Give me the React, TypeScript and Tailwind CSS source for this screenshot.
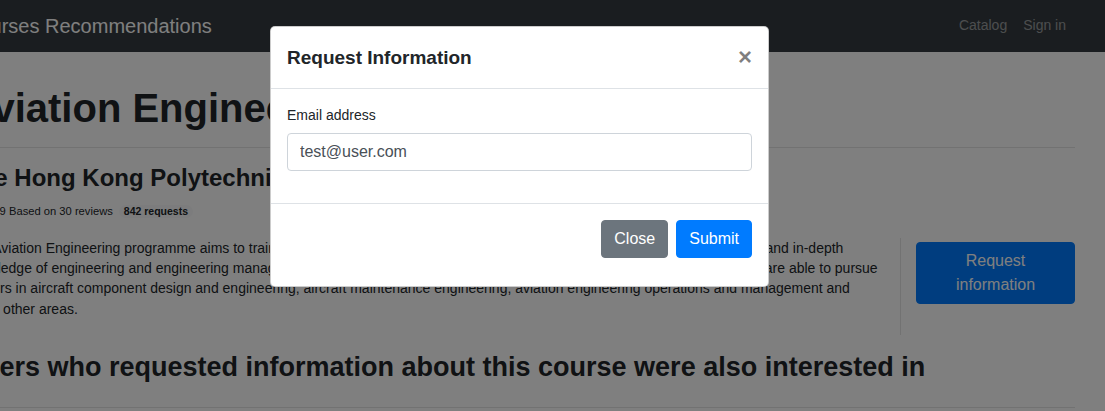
import React from "react";

const App: React.FC = () => {
  return (
    <div className="relative h-[411px] overflow-hidden bg-white font-['Liberation_Sans',Arial,sans-serif] text-[#212529]">
      {/* navbar */}
      <nav className="h-[52px] bg-[#343a40] flex items-center">
        <div className="ml-[-35px] w-[1110px] shrink-0 flex items-center justify-between">
          <a className="text-[20px] leading-[30px] text-white whitespace-nowrap">
            Courses Recommendations
          </a>
          <div className="flex items-center text-[14px] leading-[21px] text-white/50 mt-[-1px]">
            <a className="px-2">Catalog</a>
            <a className="pl-2 pr-[9px]">Sign in</a>
          </div>
        </div>
      </nav>

      {/* course page */}
      <main className="ml-[-35px] w-[1110px]">
        <h1 className="mt-[32px] text-[40px] leading-[48px] font-bold whitespace-nowrap">
          Aviation Engineering
        </h1>
        <hr className="mt-[15px] border-0 border-t border-black/10" />
        <h3 className="mt-[16px] text-[24px] leading-[28.8px] font-bold whitespace-nowrap">
          The Hong Kong Polytechnic University
        </h3>
        <div className="mt-[10px] flex items-center gap-[6px] text-[11.2px] leading-[17px] whitespace-nowrap">
          <span>Avg. 4.9 Based on 30 reviews</span>
          <span className="rounded-full bg-[#f8f9fa] px-[5px] text-[10.5px] leading-[13px] font-bold">
            842 requests
          </span>
        </div>

        <div className="mt-[18px] mx-[-15px] flex">
          <div className="w-[950px] px-[15px]">
            <p className="text-[14px] leading-[20.3px] mb-4">
              The Aviation Engineering programme aims to train students to become professional
              engineers with solid broad-based knowledge and in-depth knowledge of engineering and
              engineering management in the aviation industry. Graduates of this four-year honours
              programme are able to pursue careers in aircraft component design and engineering,
              aircraft maintenance engineering, aviation engineering operations and management and
              many other areas.
            </p>
          </div>
          <div className="w-[190px] px-[15px] border-l border-black/10">
            <button className="mt-1 w-full rounded-[4px] border border-[#007bff] bg-[#007bff] px-3 py-[6px] text-[16px] leading-[24px] text-white">
              Request information
            </button>
          </div>
        </div>

        <h2 className="mt-[16px] text-[27px] leading-[32.4px] font-bold whitespace-nowrap">
          Users who requested information about this course were also interested in
        </h2>
        <hr className="mt-[24px] border-0 border-t border-black/10" />
      </main>

      {/* backdrop */}
      <div className="absolute inset-0 bg-black/50" />

      {/* modal */}
      <div
        role="dialog"
        className="absolute left-[270px] top-[26px] w-[499px] rounded-[5px] border border-black/20 bg-white"
      >
        <div className="flex items-center justify-between border-b border-[#dee2e6] pl-4 pr-[16px] pt-4 pb-[15px]">
          <h5 className="text-[19px] leading-[30px] font-bold text-[#212529]">
            Request Information
          </h5>
          <button className="text-[24px] leading-none font-bold text-black/50 mt-[-2px]">
            ×
          </button>
        </div>
        <div className="p-4">
          <label className="block text-[14px] leading-[21px] mb-[7px]">Email address</label>
          <input
            type="email"
            defaultValue="test@user.com"
            className="mb-4 block h-[38px] w-full rounded-[4px] border border-[#ced4da] px-3 text-[16px] text-[#495057] outline-none"
          />
        </div>
        <div className="flex justify-end gap-2 border-t border-[#dee2e6] px-4 pt-4 pb-[28px]">
          <button className="rounded-[4px] border border-[#6c757d] bg-[#6c757d] px-3 py-[6px] text-[16px] leading-[24px] text-white">
            Close
          </button>
          <button className="rounded-[4px] border border-[#007bff] bg-[#007bff] px-3 py-[6px] text-[16px] leading-[24px] text-white">
            Submit
          </button>
        </div>
      </div>
    </div>
  );
};

export default App;
